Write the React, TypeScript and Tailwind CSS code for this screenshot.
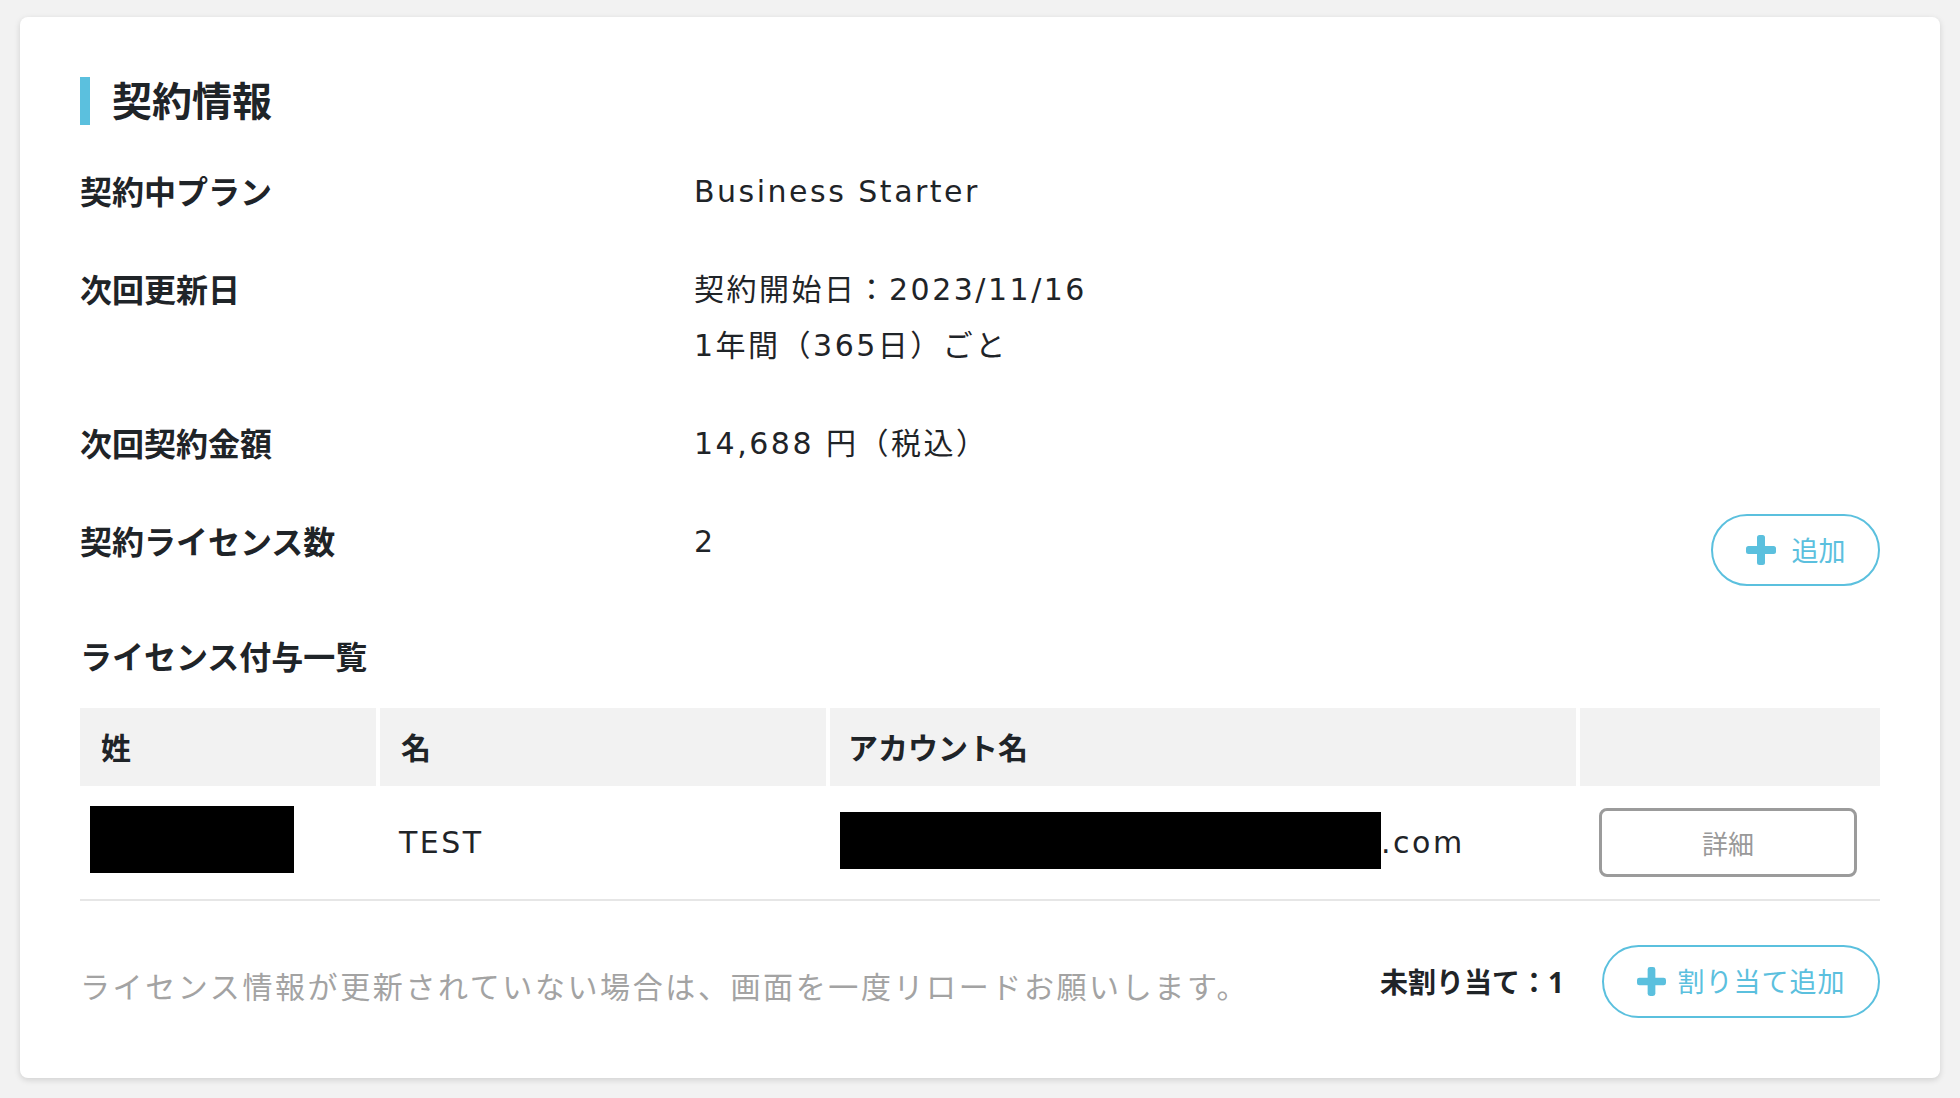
const PlusIcon = ({ size }: { size: number }) => (
  <svg width={size} height={size} viewBox="0 0 30 30" fill="#5bc0de">
    <rect x="0" y="11" width="30" height="8" rx="2.5" />
    <rect x="11" y="0" width="8" height="30" rx="2.5" />
  </svg>
);

const rows = [
  { label: "契約中プラン", value: ["Business Starter"] },
  { label: "次回更新日", value: ["契約開始日：2023/11/16", "1年間（365日）ごと"] },
  { label: "次回契約金額", value: ["14,688 円（税込）"] },
];

const App = () => {
  return (
    <div className="min-h-screen bg-[#f2f2f2] px-[20px] pt-[17px] pb-[21px] font-['Noto_Sans','Noto_Sans_CJK_JP',sans-serif] text-[#1f2428]">
      <div className="bg-white rounded-[8px] shadow-[0_2px_6px_rgba(0,0,0,0.14)] p-[60px]">
        {/* 見出し */}
        <div className="flex items-center h-[48px] border-l-[10px] border-[#5bc0de] pl-[22px]">
          <h1 className="text-[40px] font-bold leading-[48px]">契約情報</h1>
        </div>

        <div className="mt-[39px] flex flex-col gap-[42px]">
          {rows.map((r) => (
            <div key={r.label} className="flex">
              <div className="w-[614px] text-[32px] font-bold leading-[56px]">{r.label}</div>
              <div className="flex flex-col">
                {r.value.map((v) => (
                  <div key={v} className="font-['DejaVu_Sans','Noto_Sans_CJK_JP',sans-serif] text-[30px] tracking-[2.5px] leading-[56px]">
                    {v}
                  </div>
                ))}
              </div>
            </div>
          ))}
          <div className="flex items-start">
            <div className="w-[614px] text-[32px] font-bold leading-[56px]">契約ライセンス数</div>
            <div className="font-['DejaVu_Sans','Noto_Sans_CJK_JP',sans-serif] text-[30px] tracking-[2.5px] leading-[56px]">2</div>
            <button className="ml-auto flex items-center justify-center gap-[16px] w-[169px] h-[72px] rounded-full border-2 border-[#5bc0de] text-[#5bc0de] text-[27px] leading-none">
              <PlusIcon size={30} />
              <span>追加</span>
            </button>
          </div>
        </div>

        <div className="mt-[43px] text-[32px] font-bold leading-[56px]">ライセンス付与一覧</div>

        {/* 一覧 */}
        <div className="mt-[23px]">
          <div className="grid grid-cols-[296px_446px_746px_1fr] gap-x-[4px]">
            <div className="bg-[#f2f2f2] h-[78px] flex items-center pl-[21px] text-[30px] font-bold">姓</div>
            <div className="bg-[#f2f2f2] h-[78px] flex items-center pl-[21px] text-[30px] font-bold">名</div>
            <div className="bg-[#f2f2f2] h-[78px] flex items-center pl-[18px] text-[30px] font-bold">アカウント名</div>
            <div className="bg-[#f2f2f2] h-[78px]"></div>
          </div>
          <div className="grid grid-cols-[296px_446px_746px_1fr] gap-x-[4px] h-[115px] border-b-2 border-[#e6e6e6] font-['DejaVu_Sans','Noto_Sans_CJK_JP',sans-serif] text-[30px] tracking-[2.5px]">
            <div className="flex items-center pl-[10px] pb-[6px]">
              <div className="w-[204px] h-[67px] bg-black"></div>
            </div>
            <div className="flex items-center pl-[19px]">TEST</div>
            <div className="flex items-center pl-[10px]">
              <div className="w-[541px] h-[57px] bg-black mb-[4px]"></div>
              <span>.com</span>
            </div>
            <div className="flex items-center px-[19px]">
              <button className="w-[258px] h-[69px] border-[3px] border-[#9b9b9b] rounded-[8px] text-[#999] text-[26px] tracking-normal font-['Noto_Sans_CJK_JP',sans-serif]">
                詳細
              </button>
            </div>
          </div>
        </div>

        <div className="mt-[44px] flex items-center">
          <p className="flex-1 text-[30px] tracking-[2.6px] text-[#a3a3a3] pt-[10px]">
            ライセンス情報が更新されていない場合は、画面を一度リロードお願いします。
          </p>
          <div className="text-[28px] font-bold mr-[38px]">未割り当て：1</div>
          <button className="flex items-center justify-center gap-[12px] w-[278px] h-[73px] rounded-full border-2 border-[#5bc0de] text-[#5bc0de] text-[27px] tracking-[1px] leading-none">
            <PlusIcon size={29} />
            <span>割り当て追加</span>
          </button>
        </div>
      </div>
    </div>
  );
};

export default App;
